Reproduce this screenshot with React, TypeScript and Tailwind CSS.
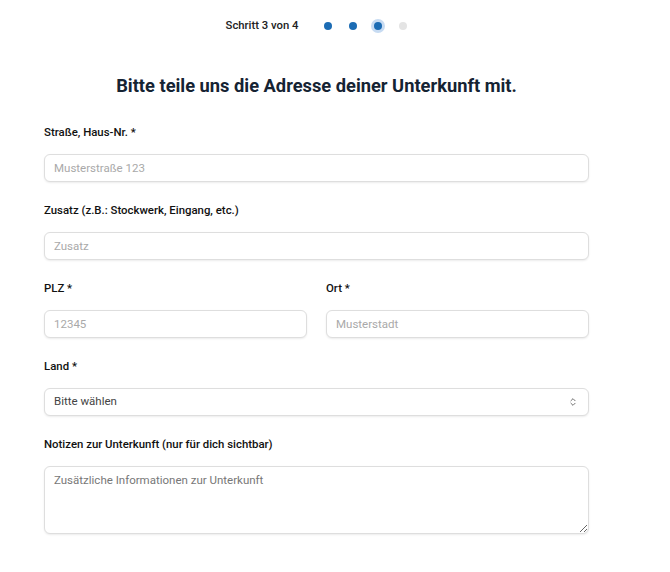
import { ChevronsUpDown } from "lucide-react";

const fieldBase =
  "h-[28px] w-full rounded-md border border-[#dedede] bg-white px-[9px] text-[11.5px] text-[#333] shadow-[0_1px_2px_rgba(0,0,0,0.08)] outline-none";
const inputCls = `${fieldBase} placeholder:text-[#a9a9a9]`;

function Label({ children }: { children: React.ReactNode }) {
  return (
    <label className="mb-[14px] block text-[11.4px] font-medium leading-[15px] text-[#111]">
      {children}
    </label>
  );
}

function Steps() {
  return (
    <div className="flex items-center justify-center pt-[18px]">
      <span className="mr-[26px] text-[11.3px] font-medium text-[#222]">
        Schritt 3 von 4
      </span>
      <div className="flex items-center gap-[17px]">
        <span className="h-[8px] w-[8px] rounded-full bg-[#1c6cb4]" />
        <span className="h-[8px] w-[8px] rounded-full bg-[#1c6cb4]" />
        <span className="h-[8px] w-[8px] rounded-full bg-[#1c6cb4] ring-[3px] ring-[#c7dbf2]" />
        <span className="h-[8px] w-[8px] rounded-full bg-[#e4e4e4]" />
      </div>
    </div>
  );
}

export default function App() {
  return (
    <div className="min-h-[572px] w-[670px] bg-white font-['Roboto',sans-serif]">
      <div className="w-[633px]">
        <Steps />
        <h1 className="mt-[37px] text-center text-[18.3px] font-bold leading-[28px] text-[#152333]">
          Bitte teile uns die Adresse deiner Unterkunft mit.
        </h1>

        <form className="ml-[44px] mt-[25px] w-[545px]">
          <div className="mb-[21px]">
            <Label>Straße, Haus-Nr. *</Label>
            <input className={inputCls} placeholder="Musterstraße 123" />
          </div>

          <div className="mb-[21px]">
            <Label>Zusatz (z.B.: Stockwerk, Eingang, etc.)</Label>
            <input className={inputCls} placeholder="Zusatz" />
          </div>

          <div className="mb-[21px] grid grid-cols-2 gap-[19px]">
            <div>
              <Label>PLZ *</Label>
              <input className={inputCls} placeholder="12345" />
            </div>
            <div>
              <Label>Ort *</Label>
              <input className={inputCls} placeholder="Musterstadt" />
            </div>
          </div>

          <div className="mb-[21px]">
            <Label>Land *</Label>
            <div className="relative">
              <select
                className={`${fieldBase} appearance-none text-[#444]`}
                defaultValue=""
              >
                <option value="">Bitte wählen</option>
                <option value="de">Deutschland</option>
                <option value="at">Österreich</option>
                <option value="ch">Schweiz</option>
              </select>
              <ChevronsUpDown
                className="pointer-events-none absolute right-[11px] top-[9px] h-[10px] w-[10px] text-[#555]"
                strokeWidth={2}
              />
            </div>
          </div>

          <div>
            <Label>Notizen zur Unterkunft (nur für dich sichtbar)</Label>
            <textarea
              className={`${fieldBase} block h-[68px] resize-y py-[5px] leading-[16px] placeholder:text-[#777]`}
              placeholder="Zusätzliche Informationen zur Unterkunft"
            />
          </div>
        </form>
      </div>
    </div>
  );
}
